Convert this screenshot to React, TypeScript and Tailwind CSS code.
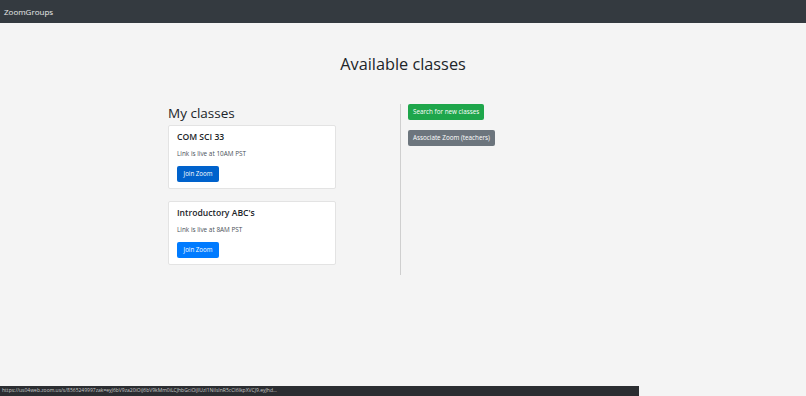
const classes = [
  { name: "COM SCI 33", time: "10AM PST", active: true },
  { name: "Introductory ABC's", time: "8AM PST", active: false },
];

const App = () => {
  return (
    <div
      className="relative w-[806px] h-[396px] overflow-hidden bg-[#f4f4f4] text-[#212529]"
      style={{ fontFamily: '"Open Sans", "Noto Sans", sans-serif' }}
    >
      <nav className="h-[23px] bg-[#343a40] flex items-center px-[4px]">
        <span className="text-[8px] text-white/90">ZoomGroups</span>
      </nav>

      <h1 className="mt-[29px] text-center text-[16.3px] font-medium leading-[24px]">
        Available classes
      </h1>

      <div className="flex mt-[28px] pl-[168px]">
        <div className="w-[168px]">
          <h2 className="text-[13.5px] font-medium leading-[18px]">My classes</h2>
          <div className="mt-[3px] flex flex-col gap-[12px]">
            {classes.map((c) => (
              <div
                key={c.name}
                className="bg-white border border-[#e3e3e3] rounded-[2px] px-[8px] pt-[5px] pb-[6px]"
              >
                <h4 className="text-[8.6px] font-semibold leading-[12px]">{c.name}</h4>
                <p className="text-[6.4px] text-[#495057] mt-[6px] leading-[9px]">
                  Link is live at {c.time}
                </p>
                <button
                  className={
                    "mt-[7px] h-[16px] w-[42px] rounded-[2px] text-white text-[6.2px] " +
                    (c.active ? "bg-[#0062cc]" : "bg-[#007bff]")
                  }
                >
                  Join Zoom
                </button>
              </div>
            ))}
          </div>
        </div>

        <div className="ml-[64px] w-px h-[171px] bg-[#cfcfcf]" />

        <div className="pl-[7px] flex flex-col items-start gap-[10px]">
          <button className="h-[16px] px-[5px] rounded-[2px] bg-[#1ea64b] text-white text-[6.3px]">
            Search for new classes
          </button>
          <button className="h-[16px] px-[5px] rounded-[2px] bg-[#6c757d] text-white text-[6.3px]">
            Associate Zoom (teachers)
          </button>
        </div>
      </div>

      <div className="absolute bottom-0 left-0 w-[639px] h-[10px] bg-[#2b2d31] flex items-center px-[2px]">
        <span className="text-[5px] text-[#c8c8c8] whitespace-nowrap">
          https://us04web.zoom.us/s/8565249997zak=eyJ6bV9za20iOiJ6bV9kMm0iLCJhbGciOiJIUzI1NiIsInR5cCI6IkpXVCJ9.eyJhd...
        </span>
      </div>
    </div>
  );
};

export default App;
